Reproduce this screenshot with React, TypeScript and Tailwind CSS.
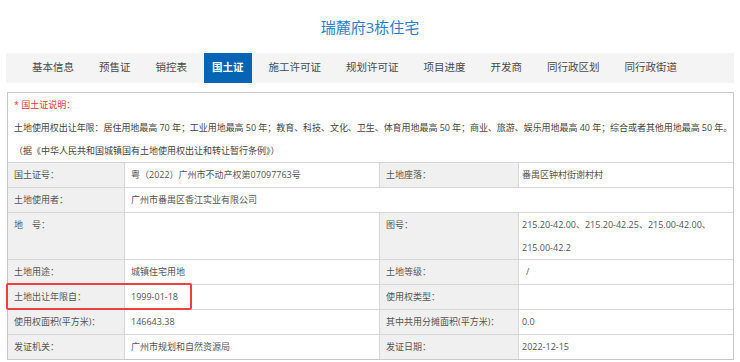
import React from "react";

const tabs = ["基本信息", "预售证", "销控表", "国土证", "施工许可证", "规划许可证", "项目进度", "开发商", "同行政区划", "同行政街道"];

const font = "font-['Open_Sans','Noto_Sans_CJK_SC',sans-serif]";

function Label({ children }: { children?: React.ReactNode }) {
    return <div className="bg-[#f0f0f0] pl-[6px] text-[#555]">{children}</div>;
}

function Value({ children, className = "" }: { children?: React.ReactNode; className?: string }) {
    return <div className={"bg-white text-[#555] " + className}>{children}</div>;
}

const App = () => {
    const active = "国土证";

    return (
        <div className={"min-h-screen bg-white " + font}>
            <div className="pt-[17px] pb-[16px] text-center text-[15px] leading-[20px] text-[#2f7dcc]">
                瑞麓府3栋住宅
            </div>

            <div className="mx-[6px] flex h-[30px] gap-[9px] bg-[#f4f4f4] pl-[18px]">
                {tabs.map((t) => (
                    <div
                        key={t}
                        className={
                            t === active
                                ? "flex items-center bg-[#0565b4] px-2 text-[10.5px] font-bold text-white"
                                : "flex items-center px-2 text-[10.5px] text-[#4a4a4a]"
                        }
                    >
                        {t}
                    </div>
                ))}
            </div>

            <div className="relative ml-[7px] mr-[6px] mt-[9px] grid grid-cols-[116px_254px_138px_1fr] gap-px border border-[#c8c8c8] bg-[#d6d6d6] text-[9px] leading-[24px]">
                <div className="col-span-4 bg-white pl-[6px] leading-[23px] text-[#444]">
                    <div className="text-[#e0392f]">* 国土证说明：</div>
                    <div className="whitespace-nowrap tracking-[-0.05px]">土地使用权出让年限：居住用地最高 70 年；工业用地最高 50 年；教育、科技、文化、卫生、体育用地最高 50 年；商业、旅游、娱乐用地最高 40 年；综合或者其他用地最高 50 年。</div>
                    <div>（据《中华人民共和国城镇国有土地使用权出让和转让暂行条例》）</div>
                </div>

                <Label>国土证号：</Label>
                <Value className="pl-[6px]">粤（2022）广州市不动产权第07097763号</Value>
                <Label>土地座落：</Label>
                <Value className="pl-[3px]">番禺区钟村街谢村村</Value>

                <Label>土地使用者：</Label>
                <Value className="col-span-3 pl-[6px]">广州市番禺区香江实业有限公司</Value>

                <Label>
                    <div className="leading-[23px]">地　号：</div>
                </Label>
                <Value />
                <Label>
                    <div className="leading-[23px]">图号：</div>
                </Label>
                <Value className="pl-[3px] leading-[23px]">
                    215.20-42.00、215.20-42.25、215.00-42.00、
                    <br />
                    215.00-42.2
                </Value>

                <Label>土地用途：</Label>
                <Value className="pl-[6px]">城镇住宅用地</Value>
                <Label>土地等级：</Label>
                <Value className="pl-[7px]">/</Value>

                <Label>土地出让年限自：</Label>
                <Value className="pl-[6px]">1999-01-18</Value>
                <Label>使用权类型：</Label>
                <Value />

                <Label>使用权面积(平方米)：</Label>
                <Value className="pl-[6px]">146643.38</Value>
                <Label>其中共用分摊面积(平方米)：</Label>
                <Value className="pl-[3px]">0.0</Value>

                <Label>发证机关：</Label>
                <Value className="pl-[6px]">广州市规划和自然资源局</Value>
                <Label>发证日期：</Label>
                <Value className="pl-[3px]">2022-12-15</Value>

                {/* red annotation box around the 出让年限 row */}
                <div className="pointer-events-none absolute left-[-2px] top-[190px] h-[27px] w-[186px] rounded-[2px] border-2 border-[#ee4040]" />
            </div>
        </div>
    );
};

export default App;
